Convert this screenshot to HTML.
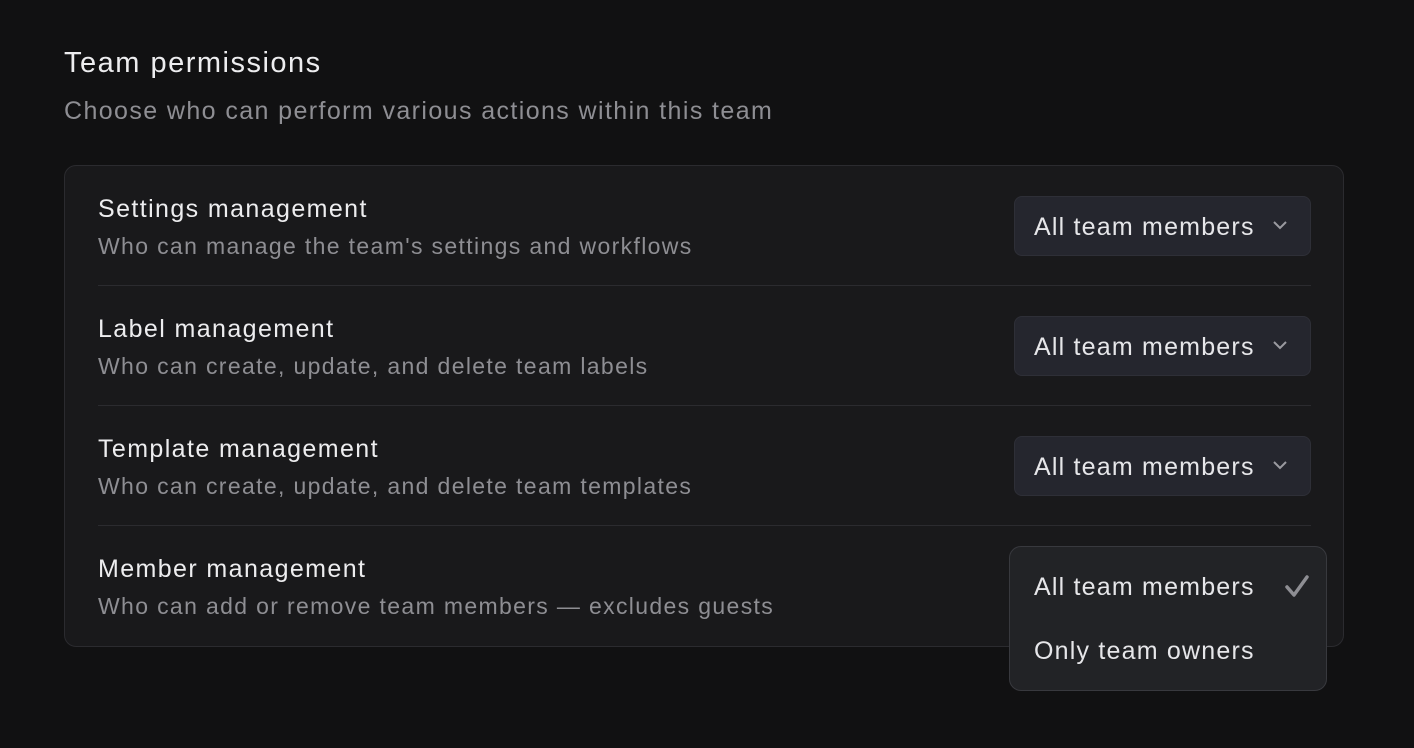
<!DOCTYPE html>
<html><head><style>
*{box-sizing:border-box;margin:0;padding:0}
body{width:1414px;height:748px;background:#111112;font-family:"Liberation Sans",sans-serif;position:relative;overflow:hidden}
.t{position:absolute;left:64px;top:47px;font-size:29px;color:#ededef;letter-spacing:1.5px}
.s{position:absolute;left:64px;top:97px;font-size:25px;color:#8e8e93;letter-spacing:1.4px}
.card{position:absolute;left:64px;top:165px;width:1280px;height:482px;background:#19191b;border:1px solid #2b2b2f;border-radius:12px}
.row{position:absolute;left:33px;width:1213px;height:120px;border-bottom:1px solid #2b2b2f}
.row:last-child{border-bottom:none}
.h{position:absolute;left:0;top:29px;font-size:25px;color:#ededef;letter-spacing:1.4px}
.d{position:absolute;left:0;top:67px;font-size:23px;color:#8e8e93;letter-spacing:1.35px}
.btn{position:absolute;left:916px;top:30px;width:297px;height:60px;background:#25262e;border:1px solid #2e2f37;border-radius:8px;color:#e6e6e9;font-size:25px;padding:16px 0 0 19px;letter-spacing:1.2px}
.btn svg{position:absolute;left:257px;top:23px}
.dd{position:absolute;left:1009px;top:546px;width:318px;height:145px;background:#222326;border:1px solid #38393e;border-radius:12px;color:#e6e6e9;font-size:25px;letter-spacing:1.2px}
.dd div{position:absolute;left:24px}
</style></head><body>
<div class="t">Team permissions</div>
<div class="s">Choose who can perform various actions within this team</div>
<div class="card">
<div class="row" style="top:0"><div class="h">Settings management</div><div class="d">Who can manage the team's settings and workflows</div><div class="btn">All team members<svg width="16" height="10" viewBox="0 0 16 10"><path d="M2 2l6 6 6-6" fill="none" stroke="#9a9aa0" stroke-width="2"/></svg></div></div>
<div class="row" style="top:120px"><div class="h">Label management</div><div class="d">Who can create, update, and delete team labels</div><div class="btn">All team members<svg width="16" height="10" viewBox="0 0 16 10"><path d="M2 2l6 6 6-6" fill="none" stroke="#9a9aa0" stroke-width="2"/></svg></div></div>
<div class="row" style="top:240px"><div class="h">Template management</div><div class="d">Who can create, update, and delete team templates</div><div class="btn">All team members<svg width="16" height="10" viewBox="0 0 16 10"><path d="M2 2l6 6 6-6" fill="none" stroke="#9a9aa0" stroke-width="2"/></svg></div></div>
<div class="row" style="top:360px"><div class="h">Member management</div><div class="d">Who can add or remove team members — excludes guests</div></div>
</div>
<div class="dd">
<div style="top:26px">All team members</div>
<svg style="position:absolute;left:274px;top:27px" width="26" height="24" viewBox="0 0 26 24"><path d="M3 13l7 8L23 3" fill="none" stroke="#8e8e93" stroke-width="3.5" stroke-linecap="round" stroke-linejoin="round"/></svg>
<div style="top:90px">Only team owners</div>
</div>
</body></html>
